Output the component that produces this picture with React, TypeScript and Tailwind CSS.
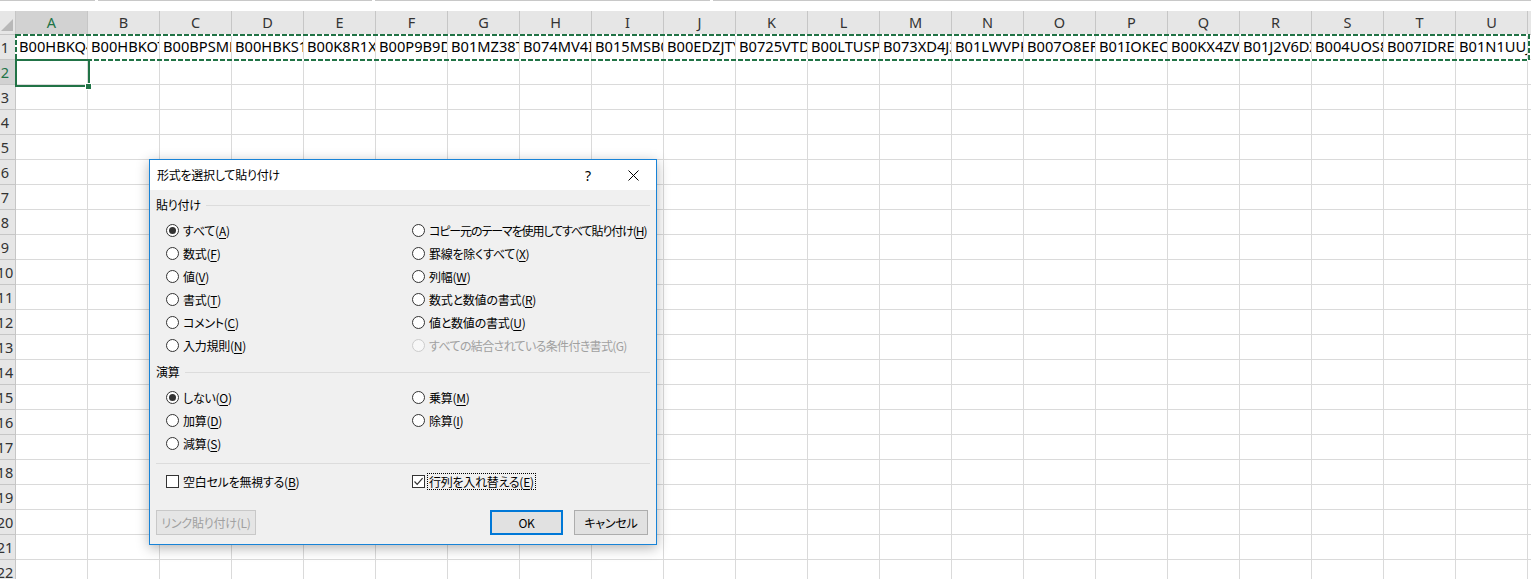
import React from "react";

const COLS = "ABCDEFGHIJKLMNOPQRSTUV".split("");
const DATA = [
  "B00HBKQ4YS", "B00HBKOTGW", "B00BPSMDIE", "B00HBKS1QA", "B00K8R1XLI", "B00P9B9DWS",
  "B01MZ38TQ4", "B074MV4IM5", "B015MSB0OA", "B00EDZJTYA", "B0725VTDZH", "B00LTUSPUA",
  "B073XD4J3P", "B01LWVPKIA", "B007O8EFRM", "B01IOKECHA", "B00KX4ZWTA", "B01J2V6DXS",
  "B004UOS8NC", "B007IDRE1U", "B01N1UUJ8A", "",
];
const ROWS = Array.from({ length: 22 }, (_, i) => i + 1);

function Label({ text, acc, disabled }: { text: string; acc?: string; disabled?: boolean }) {
  return (
    <span className={disabled ? "text-[#a0a0a0]" : "text-black"}>
      {text}
      {acc ? (
        <>
          (<span className={disabled ? "" : "underline underline-offset-[2px]"}>{acc}</span>)
        </>
      ) : null}
    </span>
  );
}

function Radio({
  text,
  acc,
  checked,
  disabled,
  tight,
}: {
  text: string;
  acc?: string;
  checked?: boolean;
  disabled?: boolean;
  tight?: string;
}) {
  return (
    <div className="flex items-center h-[23px] whitespace-nowrap">
      <span
        className={`w-[13px] h-[13px] rounded-full border flex items-center justify-center shrink-0 ${
          disabled ? "border-[#cccccc] bg-[#f7f7f7]" : "border-[#333333] bg-white"
        }`}
      >
        {checked ? <span className="w-[7px] h-[7px] rounded-full bg-[#333333]" /> : null}
      </span>
      <span className={`ml-[4px] ${tight ?? ""}`}>
        <Label text={text} acc={acc} disabled={disabled} />
      </span>
    </div>
  );
}

function Check({ text, acc, checked, focus }: { text: string; acc: string; checked?: boolean; focus?: boolean }) {
  return (
    <div className="flex items-center h-[23px] whitespace-nowrap">
      <span className="w-[13px] h-[13px] border border-[#333333] bg-white flex items-center justify-center shrink-0">
        {checked ? (
          <svg width="11" height="11" viewBox="0 0 11 11">
            <polyline points="1.5,5.5 4.2,8.3 9.6,2.2" fill="none" stroke="#333333" strokeWidth="1.2" />
          </svg>
        ) : null}
      </span>
      <span
        className={`ml-[3px] px-[1px] leading-[15px] ${
          focus ? "outline outline-1 outline-dotted outline-black" : ""
        }`}
      >
        <Label text={text} acc={acc} />
      </span>
    </div>
  );
}

function SectionTitle({ text }: { text: string }) {
  return (
    <div className="flex items-center h-[20px]">
      <span>{text}</span>
      <div className="flex-1 h-px bg-[#dcdcdc] ml-[5px]" />
    </div>
  );
}

export default function App() {
  return (
    <div className="relative w-[1531px] h-[579px] overflow-hidden bg-white font-['Noto_Sans',sans-serif]">
      {/* top strip */}
      <div className="flex h-[11px] bg-white">
        <div className="w-[95px] border-t border-[#c8c8c8]" />
        <div className="w-[3px]" />
        <div className="w-[274px] border-t border-[#c8c8c8]" />
        <div className="w-[3px]" />
        <div className="w-[335px] border-t border-[#c8c8c8]" />
        <div className="w-[3px]" />
        <div className="flex-1 border-t border-[#c8c8c8]" />
      </div>

      {/* column headers */}
      <div className="flex h-[24px]">
        <div className="relative w-[16px] shrink-0 bg-[#e6e6e6] border-r border-b border-[#c6c6c6]">
          <svg className="absolute left-0 top-0" width="15" height="23" viewBox="0 0 15 23">
            <polygon points="13,8 13,20 1,20" fill="#b8b8b8" />
          </svg>
        </div>
        {COLS.map((c) => (
          <div
            key={c}
            className={`w-[72px] shrink-0 flex items-center justify-center text-[14.5px] border-r border-b border-[#c6c6c6] ${
              c === "A" ? "bg-[#d2d2d2] text-[#217346]" : "bg-[#e6e6e6] text-[#333333]"
            }`}
          >
            {c}
          </div>
        ))}
      </div>

      {/* rows */}
      {ROWS.map((r) => (
        <div key={r} className="flex h-[25px]">
          <div
            className={`w-[16px] shrink-0 overflow-hidden border-b border-r border-[#c6c6c6] ${
              r === 2 ? "bg-[#d2d2d2] text-[#217346]" : "bg-[#e6e6e6] text-[#333333]"
            }`}
          >
            <div className="w-[26px] ml-[-8px] text-center text-[14.5px] leading-[24px]">{r}</div>
          </div>
          {COLS.map((c, ci) => (
            <div
              key={c}
              className="w-[72px] shrink-0 border-r border-b border-[#dadada] overflow-hidden whitespace-nowrap pl-[3px] text-[14.67px] leading-[23px] text-black"
            >
              {r === 1 ? DATA[ci] : ""}
            </div>
          ))}
        </div>
      ))}

      {/* marching ants around row 1 */}
      <svg className="absolute left-[15px] top-[34px]" width="1516" height="28" viewBox="0 0 1516 28">
        <rect x="1" y="1" width="1513" height="25" fill="none" stroke="#ffffff" strokeWidth="2" />
        <rect x="1" y="1" width="1513" height="25" fill="none" stroke="#217346" strokeWidth="2" strokeDasharray="5 2" />
      </svg>

      {/* selected cell A2 */}
      <div className="absolute left-[15px] top-[59px] w-[75px] h-[28px] border-2 border-[#217346]" />
      <div className="absolute left-[85px] top-[83px] w-[7px] h-[7px] bg-[#217346] border border-white" />

      {/* dialog */}
      <div className="absolute left-[149px] top-[159px] w-[508px] h-[386px] border border-[#1883d7] bg-[#f0f0f0] shadow-[0_3px_12px_rgba(0,0,0,0.3)] flex flex-col text-[12px] text-black font-['Noto_Sans_CJK_JP','Noto_Sans',sans-serif] [font-feature-settings:'palt'] tracking-[-0.25px]">
        <div className="h-[30px] bg-white flex items-center shrink-0">
          <span className="flex-1 pl-[7px]">形式を選択して貼り付け</span>
          <div className="w-[44px] h-full flex items-center justify-center text-[14px] font-['Noto_Sans',sans-serif]">?</div>
          <div className="w-[46px] h-full flex items-center justify-center">
            <svg width="11" height="11" viewBox="0 0 11 11">
              <path d="M0.5 0.5 L10.5 10.5 M10.5 0.5 L0.5 10.5" stroke="#000" strokeWidth="1" fill="none" />
            </svg>
          </div>
        </div>

        <div className="px-[6px] pt-[5px] flex flex-col">
          <SectionTitle text="貼り付け" />
          <div className="mt-[4px] ml-[10px] grid grid-cols-[246px_1fr]">
            <Radio text="すべて" acc="A" checked />
            <Radio text="コピー元のテーマを使用してすべて貼り付け" acc="H" tight="tracking-[-1.1px]" />
            <Radio text="数式" acc="F" />
            <Radio text="罫線を除くすべて" acc="X" />
            <Radio text="値" acc="V" />
            <Radio text="列幅" acc="W" />
            <Radio text="書式" acc="T" />
            <Radio text="数式と数値の書式" acc="R" />
            <Radio text="コメント" acc="C" />
            <Radio text="値と数値の書式" acc="U" />
            <Radio text="入力規則" acc="N" />
            <Radio text="すべての結合されている条件付き書式" acc="G" disabled tight="tracking-[-0.65px]" />
          </div>

          <div className="mt-[5px]">
            <SectionTitle text="演算" />
          </div>
          <div className="mt-[4px] ml-[10px] grid grid-cols-[246px_1fr]">
            <Radio text="しない" acc="O" checked />
            <Radio text="乗算" acc="M" />
            <Radio text="加算" acc="D" />
            <Radio text="除算" acc="I" />
            <Radio text="減算" acc="S" />
            <div />
          </div>

          <div className="mt-[8px] h-px bg-[#dcdcdc]" />

          <div className="mt-[6px] ml-[10px] grid grid-cols-[246px_1fr]">
            <Check text="空白セルを無視する" acc="B" />
            <Check text="行列を入れ替える" acc="E" checked focus />
          </div>

          <div className="mt-[17px] flex h-[25px]">
            <div className="w-[100px] h-full border border-[#c8c8c8] bg-[#e5e5e5] text-[#a0a0a0] flex items-center justify-center">
              リンク貼り付け(L)
            </div>
            <div className="flex-1" />
            <div className="w-[73px] h-full border-2 border-[#0078d7] bg-[#e1e1e1] flex items-center justify-center">
              OK
            </div>
            <div className="w-[11px]" />
            <div className="w-[74px] h-full border border-[#adadad] bg-[#e1e1e1] flex items-center justify-center mr-[2px]">
              キャンセル
            </div>
          </div>
        </div>
      </div>
    </div>
  );
}
